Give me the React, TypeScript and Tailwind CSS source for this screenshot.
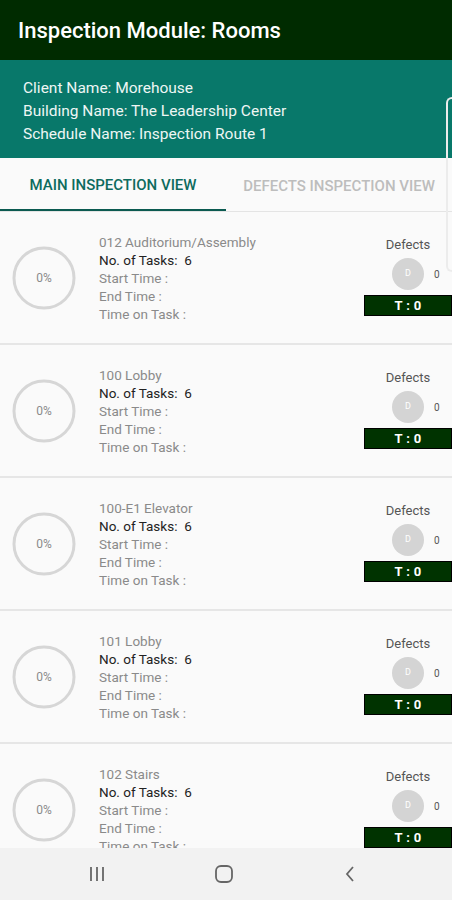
import React from "react";

interface Room {
  name: string;
  tasks: number;
}

const rooms: Room[] = [
  { name: "012 Auditorium/Assembly", tasks: 6 },
  { name: "100 Lobby", tasks: 6 },
  { name: "100-E1 Elevator", tasks: 6 },
  { name: "101 Lobby", tasks: 6 },
  { name: "102 Stairs", tasks: 6 },
];

function ProgressRing() {
  return (
    <div className="relative w-[64px] h-[64px] shrink-0">
      <svg width="64" height="64" viewBox="0 0 64 64">
        <circle cx="32" cy="32" r="30" fill="none" stroke="#d6d6d6" strokeWidth="3" />
      </svg>
      <div className="absolute inset-0 flex items-center justify-center text-[12px] text-[#8a8a8a]">
        0%
      </div>
    </div>
  );
}

function RoomRow({ room }: { room: Room }) {
  return (
    <div className="h-[133px] shrink-0 bg-[#fafafa] border-b-[2px] border-[#e6e6e6] flex">
      <div className="w-[88px] pl-[12px] flex items-center">
        <ProgressRing />
      </div>
      <div className="flex-1 pl-[11px] pt-[21px] text-[13.5px] leading-[18px] text-[#8a8a8a]">
        <div>{room.name}</div>
        <div className="text-[#222]">No. of Tasks:&nbsp; {room.tasks}</div>
        <div>Start Time :</div>
        <div>End Time :</div>
        <div>Time on Task :</div>
      </div>
      <div className="w-[88px] flex flex-col items-center pt-[24px]">
        <div className="text-[13px] text-[#555] leading-[18px]">Defects</div>
        <div className="flex items-center mt-[4px] pl-[16px] gap-[10px]">
          <div className="w-[32px] h-[32px] rounded-full bg-[#d4d4d4] flex items-center justify-center text-[9px] text-white">
            D
          </div>
          <span className="text-[10px] text-[#555] w-[6px]">0</span>
        </div>
        <div className="mt-[5px] w-full h-[21px] bg-[#003300] border border-black flex items-center justify-center text-white text-[13px] font-bold tracking-wide">
          T : 0
        </div>
      </div>
    </div>
  );
}

export default function App() {
  return (
    <div
      className="relative w-[452px] h-[900px] overflow-hidden bg-[#fafafa] flex flex-col"
      style={{ fontFamily: "Roboto, 'Liberation Sans', sans-serif" }}
    >
      {/* Title bar */}
      <div className="h-[60px] shrink-0 bg-[#002b00] flex items-center pl-[18px]">
        <h1 className="text-white text-[22px] font-medium">Inspection Module: Rooms</h1>
      </div>

      {/* Info */}
      <div className="h-[98px] shrink-0 bg-[#08786a] pl-[23px] pt-[17px] text-[15.5px] leading-[23px] text-[#eef6f4]">
        <div>Client Name: Morehouse</div>
        <div>Building Name: The Leadership Center</div>
        <div>Schedule Name: Inspection Route 1</div>
      </div>

      {/* Tabs */}
      <div className="h-[54px] shrink-0 flex border-b border-[#e4e4e4] bg-[#fafafa]">
        <div className="w-[226px] flex items-center justify-center border-b-[2px] border-[#0b5a50] pt-[4px] text-[15px] font-medium text-[#0d6b5e]">
          MAIN INSPECTION VIEW
        </div>
        <div className="flex-1 flex items-center justify-center pt-[4px] text-[15px] font-medium text-[#bdbdbd]">
          DEFECTS INSPECTION VIEW
        </div>
      </div>

      {/* Rows */}
      <div className="flex-1 flex flex-col overflow-hidden">
        {rooms.map((room) => (
          <RoomRow key={room.name} room={room} />
        ))}
      </div>

      {/* Android nav bar */}
      <div className="h-[52px] shrink-0 bg-[#f2f2f2] flex items-center pl-[87px]">
        <svg width="20" height="18" viewBox="0 0 20 18">
          <path d="M4 2v14M10 2v14M16 2v14" stroke="#666" strokeWidth="1.8" />
        </svg>
        <svg className="ml-[107px]" width="20" height="20" viewBox="0 0 20 20">
          <rect x="2" y="2" width="16" height="16" rx="5" fill="none" stroke="#666" strokeWidth="1.8" />
        </svg>
        <svg className="ml-[109px]" width="14" height="20" viewBox="0 0 14 20">
          <path d="M10 3L4 10l6 7" fill="none" stroke="#666" strokeWidth="1.8" />
        </svg>
      </div>

      {/* peeking drawer edge */}
      <div className="absolute left-[446px] top-[97px] w-[20px] h-[175px] border-l-[2px] border-y-[2px] border-[#ececec] rounded-l-[6px]" />
    </div>
  );
}
